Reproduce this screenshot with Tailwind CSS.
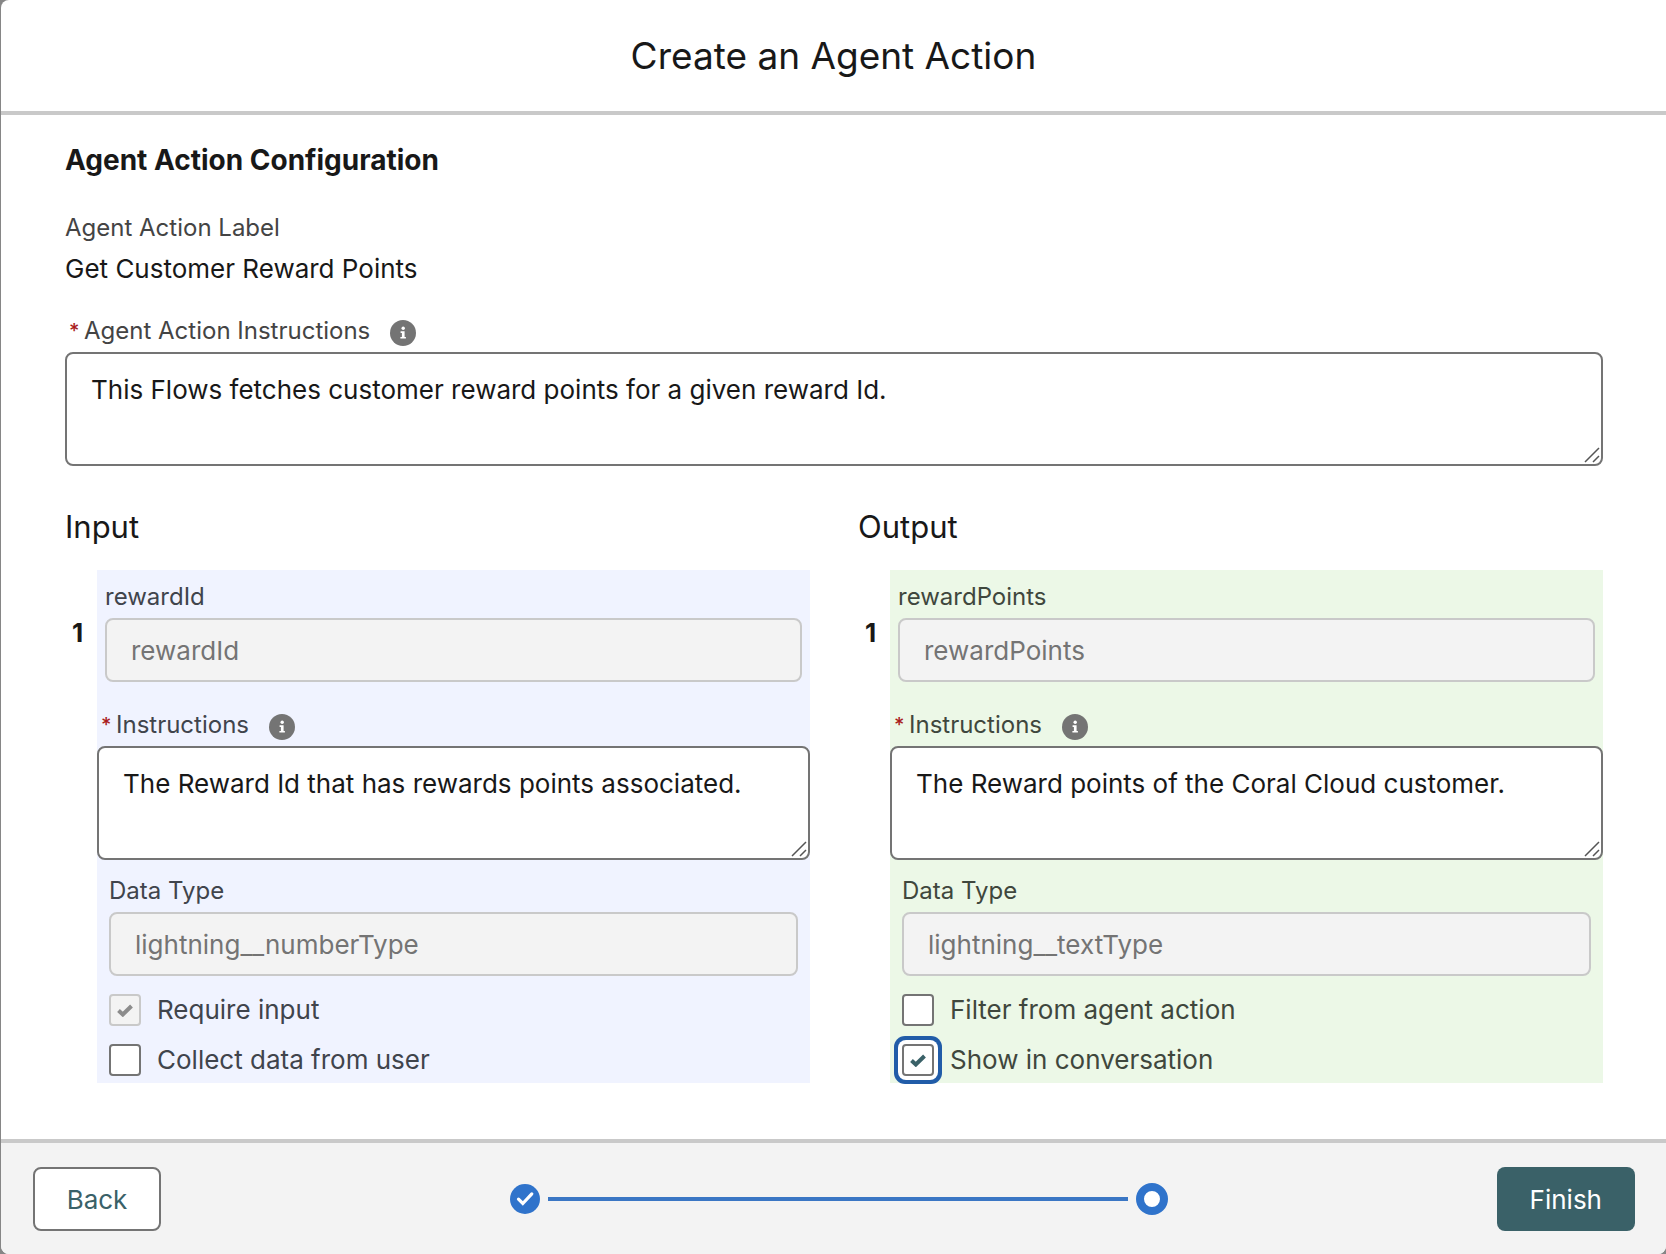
<!DOCTYPE html>
<html lang="en">
<head>
<meta charset="utf-8">
<meta name="viewport" content="width=device-width, initial-scale=1">
<title>Create an Agent Action</title>
<script src="https://cdn.jsdelivr.net/npm/@tailwindcss/browser@4"></script>
</head>
<body class="bg-[#868686] pl-px font-['Inter',sans-serif] text-[#181818]">
<svg class="hidden" aria-hidden="true">
  <symbol id="info" viewBox="0 0 26 26"><circle cx="13" cy="13" r="13" fill="#747474"/><circle cx="13.2" cy="8.300" r="1.700" fill="#fff"/><path d="M10.600 11.200h4v5.700h1.300v1.600h-5.500v-1.600h1.500v-4h-1.300z" fill="#fff"/></symbol>
  <symbol id="grip" viewBox="0 0 16 16"><path d="M1 15 15 1M9 15l6-6" fill="none" stroke="#555" stroke-width="1.500"/></symbol>
  <symbol id="tick" viewBox="0 0 16 13"><path d="M1.500 6.500 5.800 10.500 14.500 2" fill="none" stroke="currentColor" stroke-width="4"/></symbol>
</svg>
<form class="flex min-h-screen flex-col overflow-hidden rounded-b-lg rounded-tl-lg bg-white">
  <header class="border-b-4 border-[#c9c9c9] py-8 text-center">
    <h1 class="text-[37px] leading-[47px]">Create an Agent Action</h1>
  </header>

  <main class="flex-1 pt-7 pr-[63px] pb-14 pl-16">
    <h2 class="text-[28px] leading-[34px] font-bold">Agent Action Configuration</h2>
    <p class="mt-[35px] text-[24px] leading-8 text-[#444]">Agent Action Label</p>
    <p class="mt-[5px] text-[26px] leading-10">Get Customer Reward Points</p>

    <div class="mt-[26px] flex h-8 items-center pl-1 text-[24px] leading-8 text-[#444]">
      <label for="action-instructions" class="flex gap-1"><span class="w-[11px] text-[20px] font-medium text-[#aa1c1c]">*</span>Agent Action Instructions</label>
      <button type="button" aria-label="Help" class="mt-1 ml-5"><svg class="size-[26px]"><use href="#info"/></svg></button>
    </div>
    <div class="relative mt-[5px]">
      <textarea id="action-instructions" class="block h-[114px] w-full resize-none rounded-lg border-2 border-[#747474] bg-white px-6 py-[18px] text-[26px] leading-9">This Flows fetches customer reward points for a given reward Id.</textarea>
      <svg class="pointer-events-none absolute right-[3px] bottom-[3px] size-4"><use href="#grip"/></svg>
    </div>

    <div class="mt-[41px] grid grid-cols-2 gap-12">
      <section>
        <h3 class="text-[31px] leading-10">Input</h3>
        <div class="mt-[23px] flex">
          <span class="w-8 shrink-0 pt-[45px] pl-[7px] text-[26px] leading-9 font-bold">1</span>
          <div class="min-w-0 flex-1 bg-[#f0f3ff] pt-[11px] pb-[7px] text-[#40444c]">
            <div class="px-2">
              <label for="in-name" class="block text-[24px] leading-8">rewardId</label>
              <input id="in-name" type="text" disabled value="rewardId" class="mt-[5px] block h-16 w-full rounded-lg border-2 border-[#c9c9c9] bg-[#f3f3f3] px-6 text-[26px] text-[#747474]">
            </div>
            <div class="mt-[27px] flex h-8 items-center pl-1 text-[24px] leading-8">
              <label for="in-instructions" class="flex gap-1"><span class="w-[11px] text-[20px] font-medium text-[#aa1c1c]">*</span>Instructions</label>
              <button type="button" aria-label="Help" class="mt-1 ml-5"><svg class="size-[26px]"><use href="#info"/></svg></button>
            </div>
            <div class="relative mt-[5px]">
              <textarea id="in-instructions" class="block h-[114px] w-full resize-none rounded-lg border-2 border-[#747474] bg-white px-6 py-[18px] text-[26px] leading-9 text-[#181818]">The Reward Id that has rewards points associated.</textarea>
              <svg class="pointer-events-none absolute right-[3px] bottom-[3px] size-4"><use href="#grip"/></svg>
            </div>
            <div class="mt-[15px] px-3">
              <label for="in-type" class="block text-[24px] leading-8">Data Type</label>
              <input id="in-type" type="text" disabled value="lightning__numberType" class="mt-[5px] block h-16 w-full rounded-lg border-2 border-[#c9c9c9] bg-[#f3f3f3] px-6 text-[26px] text-[#747474]">
              <label class="mt-[18px] flex w-fit items-center gap-4 text-[26px] leading-8">
                <span class="relative flex size-8 items-center justify-center">
                  <input type="checkbox" checked disabled class="absolute inset-0 size-8 appearance-none rounded border-2 border-[#c9c9c9] bg-[#f3f3f3]">
                  <svg class="pointer-events-none relative h-[13px] w-4 text-[#8c8c8c]"><use href="#tick"/></svg>
                </span>Require input</label>
              <label class="mt-[18px] flex w-fit items-center gap-4 text-[26px] leading-8">
                <input type="checkbox" class="size-8 appearance-none rounded border-2 border-[#747474] bg-white">Collect data from user</label>
            </div>
          </div>
        </div>
      </section>

      <section>
        <h3 class="text-[31px] leading-10">Output</h3>
        <div class="mt-[23px] flex">
          <span class="w-8 shrink-0 pt-[45px] pl-[7px] text-[26px] leading-9 font-bold">1</span>
          <div class="min-w-0 flex-1 bg-[#ecf8e7] pt-[11px] pb-[7px] text-[#3f473d]">
            <div class="px-2">
              <label for="out-name" class="block text-[24px] leading-8">rewardPoints</label>
              <input id="out-name" type="text" disabled value="rewardPoints" class="mt-[5px] block h-16 w-full rounded-lg border-2 border-[#c9c9c9] bg-[#f3f3f3] px-6 text-[26px] text-[#747474]">
            </div>
            <div class="mt-[27px] flex h-8 items-center pl-1 text-[24px] leading-8">
              <label for="out-instructions" class="flex gap-1"><span class="w-[11px] text-[20px] font-medium text-[#aa1c1c]">*</span>Instructions</label>
              <button type="button" aria-label="Help" class="mt-1 ml-5"><svg class="size-[26px]"><use href="#info"/></svg></button>
            </div>
            <div class="relative mt-[5px]">
              <textarea id="out-instructions" class="block h-[114px] w-full resize-none rounded-lg border-2 border-[#747474] bg-white px-6 py-[18px] text-[26px] leading-9 text-[#181818]">The Reward points of the Coral Cloud customer.</textarea>
              <svg class="pointer-events-none absolute right-[3px] bottom-[3px] size-4"><use href="#grip"/></svg>
            </div>
            <div class="mt-[15px] px-3">
              <label for="out-type" class="block text-[24px] leading-8">Data Type</label>
              <input id="out-type" type="text" disabled value="lightning__textType" class="mt-[5px] block h-16 w-full rounded-lg border-2 border-[#c9c9c9] bg-[#f3f3f3] px-6 text-[26px] text-[#747474]">
              <label class="mt-[18px] flex w-fit items-center gap-4 text-[26px] leading-8">
                <input type="checkbox" class="size-8 appearance-none rounded border-2 border-[#747474] bg-white">Filter from agent action</label>
              <label class="mt-[18px] flex w-fit items-center gap-4 text-[26px] leading-8">
                <span class="relative flex size-8 items-center justify-center">
                  <input type="checkbox" checked class="absolute inset-0 size-8 appearance-none rounded border-2 border-[#747474] bg-white ring-4 ring-[#215ca8] ring-offset-4 ring-offset-white">
                  <svg class="pointer-events-none relative h-[13px] w-4 text-[#3a6168]"><use href="#tick"/></svg>
                </span>Show in conversation</label>
            </div>
          </div>
        </div>
      </section>
    </div>
  </main>

  <footer class="flex items-center border-t-4 border-[#c9c9c9] bg-[#f3f3f3] pt-6 pr-[31px] pb-[23px] pl-8">
    <button type="button" class="h-16 w-32 rounded-lg border-2 border-[#747474] bg-white text-[26px] text-[#3a6168]">Back</button>
    <div class="flex flex-1 justify-center pl-5">
      <div class="flex w-1/2 items-center gap-2">
        <svg class="size-[30px] shrink-0" viewBox="0 0 30 30"><circle cx="15" cy="15" r="15" fill="#2f73cb"/><path d="m8.500 15.200 4.300 4.300 9-9.600" fill="none" stroke="#fff" stroke-width="3.200" stroke-linecap="round"/></svg>
        <div class="h-1 flex-1 bg-[#3a76c4]"></div>
        <div class="size-8 shrink-0 rounded-full border-8 border-[#2f73cb] bg-white"></div>
      </div>
    </div>
    <button type="submit" class="h-16 rounded-lg bg-[#3a6168] px-[33px] text-[26px] text-white">Finish</button>
  </footer>
</form>
</body>
</html>
